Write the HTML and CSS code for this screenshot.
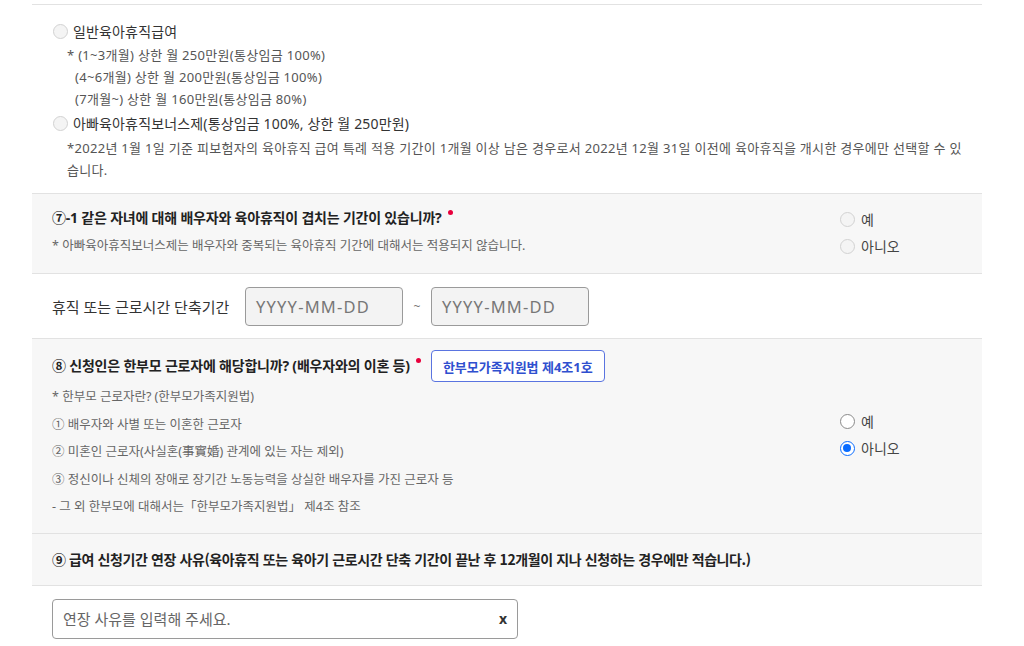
FILE: index.html
```html
<!DOCTYPE html>
<html lang="ko">
<head>
<meta charset="utf-8">
<link rel="stylesheet" href="styles.css">
</head>
<body>
<div class="form">
  <section class="sec sec-options">
    <div class="radio-row"><span class="radio radio-dis"></span><span class="opt-label">일반육아휴직급여</span></div>
    <div class="sub">
      <div class="sub-line">* (1~3개월) 상한 월 250만원(통상임금 100%)</div>
      <div class="sub-line indent">(4~6개월) 상한 월 200만원(통상임금 100%)</div>
      <div class="sub-line indent">(7개월~) 상한 월 160만원(통상임금 80%)</div>
    </div>
    <div class="radio-row"><span class="radio radio-dis"></span><span class="opt-label">아빠육아휴직보너스제(통상임금 100%, 상한 월 250만원)</span></div>
    <p class="note-long">*2022년 1월 1일 기준 피보험자의 육아휴직 급여 특례 적용 기간이 1개월 이상 남은 경우로서 2022년 12월 31일 이전에 육아휴직을 개시한 경우에만 선택할 수 있습니다.</p>
  </section>

  <section class="sec sec-gray sec-q71">
    <div class="q-main">
      <h3 class="q-title">⑦-1 같은 자녀에 대해 배우자와 육아휴직이 겹치는 기간이 있습니까?<span class="req"></span></h3>
      <p class="q-note">* 아빠육아휴직보너스제는 배우자와 중복되는 육아휴직 기간에 대해서는 적용되지 않습니다.</p>
    </div>
    <div class="q-choices q71-choices">
      <div class="choice"><span class="radio radio-dis"></span><span class="choice-label">예</span></div>
      <div class="choice"><span class="radio radio-dis"></span><span class="choice-label">아니오</span></div>
    </div>
  </section>

  <section class="sec sec-period">
    <span class="period-label">휴직 또는 근로시간 단축기간</span>
    <div class="date-box">YYYY-MM-DD</div>
    <span class="tilde">~</span>
    <div class="date-box">YYYY-MM-DD</div>
  </section>

  <section class="sec sec-gray sec-q8">
    <div class="q-main">
      <div class="q8-head">
        <h3 class="q-title">⑧ 신청인은 한부모 근로자에 해당합니까? (배우자와의 이혼 등)<span class="req"></span></h3>
        <span class="law-btn">한부모가족지원법 제4조1호</span>
      </div>
      <ul class="q8-list">
        <li>* 한부모 근로자란? (한부모가족지원법)</li>
        <li>① 배우자와 사별 또는 이혼한 근로자</li>
        <li>② 미혼인 근로자(사실혼(事實婚) 관계에 있는 자는 제외)</li>
        <li>③ 정신이나 신체의 장애로 장기간 노동능력을 상실한 배우자를 가진 근로자 등</li>
        <li>- 그 외 한부모에 대해서는「한부모가족지원법」 제4조 참조</li>
      </ul>
    </div>
    <div class="q-choices q8-choices">
      <div class="choice"><span class="radio radio-off"></span><span class="choice-label">예</span></div>
      <div class="choice"><span class="radio radio-on"></span><span class="choice-label">아니오</span></div>
    </div>
  </section>

  <section class="sec sec-gray sec-q9">
    <h3 class="q9-title">⑨ 급여 신청기간 연장 사유(육아휴직 또는 육아기 근로시간 단축 기간이 끝난 후 12개월이 지나 신청하는 경우에만 적습니다.)</h3>
  </section>

  <section class="sec sec-reason">
    <div class="reason-box">
      <span class="reason-ph">연장 사유를 입력해 주세요.</span>
      <span class="reason-x">x</span>
    </div>
  </section>
</div>
</body>
</html>
```

FILE: styles.css
```css
* { box-sizing: border-box; }
html, body { margin: 0; padding: 0; background: #fff; }
body {
  font-family: "Noto Sans", "Noto Sans CJK KR", sans-serif;
  color: #333;
  padding-top: 4px;
}
.form {
  margin-left: 32px;
  width: 950px;
}
.sec {
  border-top: 1px solid #e2e2e2;
}
.sec-gray { background: #f7f7f7; }

/* radios */
.radio {
  display: inline-block;
  width: 15px;
  height: 15px;
  border-radius: 50%;
  flex: none;
  position: relative;
}
.radio-dis { background: #f4f4f4; border: 1px solid #d2d2d2; }
.radio-off { background: #fff; border: 1.5px solid #8a8a8a; }
.radio-on { background: #fff; border: 1.5px solid #0a6cff; }
.radio-on::after {
  content: "";
  position: absolute;
  left: 2px; top: 2px;
  width: 8px; height: 8px;
  border-radius: 50%;
  background: #0a6cff;
}

/* section 1 */
.sec-options { padding: 15px 0 12px 21px; }
.radio-row {
  display: flex;
  align-items: center;
  gap: 5px;
  height: 22px;
  font-size: 14px;
  color: #333;
  letter-spacing: 0.15px;
}
.sub { margin: 2px 0 2px 14px; }
.sub-line { font-size: 13px; line-height: 22px; color: #555; letter-spacing: 0.3px; }
.sub-line.indent { padding-left: 8px; }
.note-long {
  margin: 3px 0 0 14px;
  padding-right: 10px;
  font-size: 13px;
  line-height: 22px;
  color: #555;
  letter-spacing: 0.3px;
}

/* question blocks */
.sec-q71 {
  display: flex;
  padding: 13px 0 16px 20px;
}
.q-main { flex: 1; }
.q-title {
  margin: 0;
  font-size: 14px;
  font-weight: 700;
  line-height: 22px;
  color: #222;
  letter-spacing: -0.2px;
}
.req {
  display: inline-block;
  width: 5px;
  height: 5px;
  border-radius: 50%;
  background: #e8003c;
  vertical-align: top;
  margin: 3px 0 0 6px;
}
.q-note {
  margin: 6px 0 0;
  font-size: 12.5px;
  line-height: 22px;
  color: #666;
}
.q-choices {
  width: 142px;
  display: flex;
  flex-direction: column;
  gap: 5px;
}
.q71-choices { padding-top: 1px; }
.choice {
  display: flex;
  align-items: center;
  gap: 6px;
  height: 22px;
  font-size: 14px;
  color: #444;
}

/* period */
.sec-period {
  display: flex;
  align-items: center;
  height: 65px;
  padding-left: 20px;
}
.period-label { font-size: 15px; color: #333; width: 193px; }
.date-box {
  width: 158px;
  height: 39px;
  border: 1px solid #9a9a9a;
  border-radius: 4px;
  background: #f3f3f3;
  font-size: 16.5px;
  letter-spacing: 1.2px;
  color: #777;
  display: flex;
  align-items: center;
  padding-left: 10px;
}
.tilde { width: 28px; text-align: center; font-size: 12px; color: #777; }

/* q8 */
.sec-q8 {
  display: flex;
  padding: 11px 0 12px 20px;
}
.q8-head { display: flex; align-items: center; gap: 10px; }
.law-btn {
  display: inline-flex;
  align-items: center;
  justify-content: center;
  height: 32px;
  width: 174px;
  border: 1px solid #5a74e0;
  border-radius: 4px;
  background: #fff;
  color: #2f4fcf;
  font-size: 13px;
  font-weight: 700;
}
.q8-list {
  list-style: none;
  margin: 1px 0 0;
  padding: 0;
}
.q8-list li {
  font-size: 12.5px;
  line-height: 27.6px;
  color: #666;
}
.q8-choices { padding-top: 60px; }

/* q9 */
.sec-q9 {
  height: 53px;
  display: flex;
  align-items: center;
  padding-left: 20px;
  border-bottom: 1px solid #e2e2e2;
}
.q9-title {
  margin: 0;
  font-family: "Noto Sans CJK KR", sans-serif;
  font-size: 14px;
  font-weight: 700;
  color: #222;
  letter-spacing: -0.4px;
}
.sec-reason {
  border-top: none;
  padding: 13px 0 0 20px;
}
.reason-box {
  width: 466px;
  height: 40px;
  border: 1px solid #9a9a9a;
  border-radius: 4px;
  display: flex;
  align-items: center;
  justify-content: space-between;
  padding: 0 10px 0 10px;
  font-size: 15px;
  color: #666;
}
.reason-x { font-size: 14px; font-weight: 700; color: #333; }
```
